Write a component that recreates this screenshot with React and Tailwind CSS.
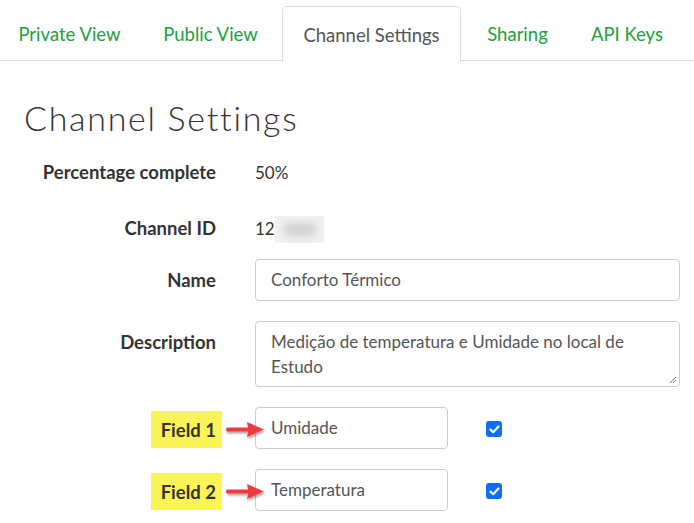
import React from "react";

const tabs = [
    { name: "Private View", w: "w-[139px]" },
    { name: "Public View", w: "w-[143px]" },
    { name: "Channel Settings", w: "w-[179px]", active: true },
    { name: "Sharing", w: "w-[113px]" },
    { name: "API Keys", w: "w-[106px]" },
];

function Arrow() {
    return (
        <svg
            className="absolute left-[-32px] top-[10px]"
            width="44"
            height="24"
            viewBox="0 0 44 24"
        >
            <defs>
                <filter id="sh" x="-20%" y="-40%" width="140%" height="180%">
                    <feDropShadow dx="1" dy="2" stdDeviation="1.2" floodColor="#000" floodOpacity="0.35" />
                </filter>
            </defs>
            <g filter="url(#sh)">
                <path
                    d="M3 9.5 L24 9.5 L23 4 L40 11.5 L23 19 L24 13.5 L3 13.5 Q1 11.5 3 9.5 Z"
                    fill="#ef3b3f"
                />
            </g>
        </svg>
    );
}

function Checkbox() {
    return (
        <div className="shrink-0 ml-[38px] mt-[14px] w-4 h-4 rounded-[3px] bg-[#0d6efd] flex items-center justify-center">
            <svg width="11" height="9" viewBox="0 0 11 9">
                <path d="M1.5 4.6 L4.2 7.2 L9.5 1.6" stroke="#fff" strokeWidth="2.2" fill="none" strokeLinecap="round" strokeLinejoin="round" />
            </svg>
        </div>
    );
}

function Row({ label, children, highlight, className = "" }) {
    return (
        <div className={"flex items-start " + className}>
            <div className="shrink-0 w-[192px] h-[42px] flex items-center justify-end font-bold text-[18.5px] text-[#333] whitespace-nowrap">
                {highlight ? (
                    <span className="bg-[#fbf456] h-[37px] mt-[3px] pl-[10px] pr-[6px] mr-[-6px] pt-[2px] flex items-center">
                        {label}
                    </span>
                ) : (
                    <span className="pt-[2px]">{label}</span>
                )}
            </div>
            <div className="shrink-0 ml-[39px] flex items-start">{children}</div>
        </div>
    );
}

export default function App() {
    return (
        <div
            className="w-[694px] h-[523px] bg-white overflow-hidden text-[#333]"
            style={{ fontFamily: "Lato, 'Noto Sans', sans-serif" }}
        >
            <div className="flex h-[61px] border-b border-[#dddddd] pt-[6px]">
                {tabs.map((tab, index) => (
                    <div
                        key={index}
                        className={
                            tab.w +
                            " shrink-0 h-[55px] flex items-center justify-center text-[18.5px] " +
                            (tab.active
                                ? "border border-[#dddddd] border-b-white rounded-t-[5px] text-[#555] bg-white h-[56px] -mb-px"
                                : "text-[#22a03d]")
                        }
                    >
                        <span className="mt-[3px]">{tab.name}</span>
                    </div>
                ))}
            </div>

            <div className="px-6">
                <h1 className="text-[34px] font-light leading-[40px] mt-[37px] tracking-[1.7px] text-[#333]">
                    Channel Settings
                </h1>

                <Row label="Percentage complete" className="mt-[13px]">
                    <div className="h-[42px] flex items-center text-[17px] pt-[2px]">50%</div>
                </Row>

                <Row label="Channel ID" className="mt-[14px]">
                    <div className="h-[42px] flex items-center text-[17px] pt-[2px]">
                        12
                        <span className="inline-block w-[49px] h-[27px] bg-[#f2f2f2] relative overflow-hidden">
                            <span className="absolute left-[8px] top-[7px] w-[34px] h-[13px] bg-[#cfcfcf] blur-[4px] rounded-full"></span>
                        </span>
                    </div>
                </Row>

                <Row label="Name" className="mt-[10px]">
                    <div className="w-[425px] h-[42px] border border-[#cccccc] rounded-[4px] px-[15px] flex items-center text-[17px] text-[#555]">
                        Conforto Térmico
                    </div>
                </Row>

                <Row label="Description" className="mt-[20px]">
                    <div className="relative w-[425px] h-[66px] border border-[#cccccc] rounded-[4px] px-[15px] pt-[7px] text-[17px] leading-[25px] text-[#555]">
                        Medição de temperatura e Umidade no local de Estudo
                        <svg className="absolute right-[2px] bottom-[2px]" width="8" height="8" viewBox="0 0 8 8">
                            <path d="M7 1 L1 7 M7 4 L4 7" stroke="#777" strokeWidth="1" />
                        </svg>
                    </div>
                </Row>

                <Row label="Field 1" highlight className="mt-[20px]">
                    <div className="relative w-[193px] h-[42px] border border-[#cccccc] rounded-[4px] px-[15px] flex items-center text-[17px] text-[#555]">
                        <Arrow />
                        Umidade
                    </div>
                    <Checkbox />
                </Row>

                <Row label="Field 2" highlight className="mt-[20px]">
                    <div className="relative w-[193px] h-[42px] border border-[#cccccc] rounded-[4px] px-[15px] flex items-center text-[17px] text-[#555]">
                        <Arrow />
                        Temperatura
                    </div>
                    <Checkbox />
                </Row>
            </div>
        </div>
    );
}
